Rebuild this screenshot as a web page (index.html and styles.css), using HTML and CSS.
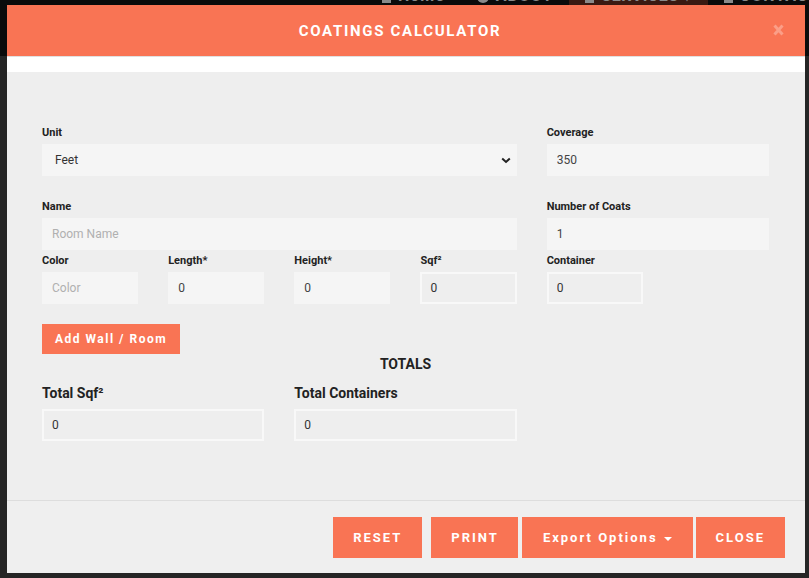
FILE: index.html
```html
<!DOCTYPE html>
<html lang="en">
<head>
<meta charset="utf-8">
<title>Coatings Calculator</title>
<link rel="stylesheet" href="styles.css">
</head>
<body>
<div class="site">
  <header class="site-nav">
    <ul class="nav-list">
      <li class="nav-item"><span class="nav-icon"></span>Home</li>
      <li class="nav-item"><span class="nav-icon round"></span>ABOUT</li>
      <li class="nav-item active"><span class="nav-icon"></span>SERVICES ▾</li>
      <li class="nav-item"><span class="nav-icon"></span>CONTACT</li>
    </ul>
  </header>
  <main class="site-body"></main>
</div>

<div class="modal">
  <div class="modal-header">
    <h4 class="modal-title">COATINGS CALCULATOR</h4>
    <button class="close" type="button" aria-label="Close">
      <svg width="11" height="12" viewBox="0 0 11 12"><path d="M1.5 1.5 L9.5 10.5 M9.5 1.5 L1.5 10.5" stroke="currentColor" stroke-width="3" fill="none"/></svg>
    </button>
  </div>
  <div class="modal-sep"></div>
  <div class="modal-body">
    <div class="row row-1">
      <div class="field span-8">
        <label>Unit</label>
        <div class="input select"><span>Feet</span>
          <svg class="chev" width="10" height="7" viewBox="0 0 10 7"><path d="M1.2 1.5 L5 5 L8.8 1.5" stroke="#222" stroke-width="2" fill="none"/></svg>
        </div>
      </div>
      <div class="field span-4">
        <label>Coverage</label>
        <input class="input" type="text" value="350">
      </div>
    </div>
    <div class="row row-2">
      <div class="field span-8">
        <label>Name</label>
        <input class="input" type="text" placeholder="Room Name">
      </div>
      <div class="field span-4">
        <label>Number of Coats</label>
        <input class="input" type="text" value="1">
      </div>
    </div>
    <div class="row row-3">
      <div class="field span-2">
        <label>Color</label>
        <input class="input" type="text" placeholder="Color">
      </div>
      <div class="field span-2">
        <label>Length*</label>
        <input class="input" type="text" value="0">
      </div>
      <div class="field span-2">
        <label>Height*</label>
        <input class="input" type="text" value="0">
      </div>
      <div class="field span-2">
        <label>Sqf²</label>
        <input class="input input-ro" type="text" value="0" readonly>
      </div>
      <div class="field span-2">
        <label>Container</label>
        <input class="input input-ro" type="text" value="0" readonly>
      </div>
    </div>
    <button class="btn-add" type="button">Add Wall / Room</button>
    <h5 class="totals-title">TOTALS</h5>
    <div class="row row-totals">
      <div class="field span-4">
        <label class="label-lg">Total Sqf²</label>
        <input class="input input-ro" type="text" value="0" readonly>
      </div>
      <div class="field span-4">
        <label class="label-lg">Total Containers</label>
        <input class="input input-ro" type="text" value="0" readonly>
      </div>
    </div>
  </div>
  <div class="modal-footer">
    <button class="btn" type="button">RESET</button>
    <button class="btn btn-print" type="button">PRINT</button>
    <button class="btn btn-export" type="button">Export Options<span class="caret"></span></button>
    <button class="btn btn-close" type="button">CLOSE</button>
  </div>
</div>
</body>
</html>
```

FILE: styles.css
```css
* { box-sizing: border-box; }

html, body {
  margin: 0;
  height: 100%;
}

body {
  background: #252525;
  font-family: Roboto, "Liberation Sans", Arial, sans-serif;
  overflow: hidden;
}

/* ---------- page behind the modal ---------- */
.site-nav {
  height: 56px;
  background: #0b0b0b;
  overflow: hidden;
}

.nav-list {
  list-style: none;
  margin: -13px 0 0 0;
  padding: 0 0 0 366px;
  display: flex;
  align-items: flex-start;
  gap: 0;
}

.nav-item {
  display: flex;
  align-items: flex-start;
  gap: 7px;
  color: #8a8a8a;
  font-size: 16px;
  font-weight: 700;
  letter-spacing: 1px;
  line-height: 18px;
  height: 60px;
  padding: 0 16px;
  white-space: nowrap;
}

.nav-item.active {
  background: #3a1a12;
  letter-spacing: 0.5px;
}

.nav-icon {
  display: inline-block;
  width: 9px;
  height: 16px;
  background: #8a8a8a;
}

.nav-icon.round { border-radius: 50%; width: 12px; height: 12px; margin-top: 4px; }

.site-body { height: calc(100% - 56px); }

/* ---------- modal ---------- */
.modal {
  position: absolute;
  left: 7px;
  top: 5px;
  width: 798px;
  height: 568px;
  background: #eeeeee;
  display: flex;
  flex-direction: column;
}

.modal-header {
  height: 51px;
  flex: none;
  background: #f97454;
  display: flex;
  align-items: center;
  padding: 0 15px 0 20px;
}

.modal-title {
  flex: 1;
  margin: 0;
  text-align: center;
  color: #ffffff;
  font-size: 15px;
  font-weight: 700;
  letter-spacing: 1.7px;
  line-height: 20px;
}

.close {
  width: 17px;
  height: 12px;
  padding: 0;
  border: 0;
  background: transparent;
  color: rgba(255, 255, 255, 0.3);
  display: flex;
  align-items: flex-start;
  justify-content: flex-start;
  margin-bottom: 2px;
}

.modal-sep {
  flex: none;
  height: 16px;
  border-top: 1px solid #e0e0e0;
  background: #ffffff;
}

.modal-body {
  flex: 1;
  padding: 53px 36px 0 35px;
}

.row {
  display: grid;
  grid-template-columns: repeat(12, 1fr);
  column-gap: 30px;
}

.row-1 { margin-bottom: 23px; }
.row-2 { margin-bottom: 3px; }

.span-2 { grid-column: span 2; }
.span-4 { grid-column: span 4; }
.span-8 { grid-column: span 8; }

label {
  display: block;
  font-size: 11px;
  line-height: 15px;
  font-weight: 700;
  color: #222222;
  margin-bottom: 4px;
}

.input {
  display: block;
  width: 100%;
  height: 32px;
  margin: 0;
  border: 0;
  border-radius: 0;
  background: #f5f5f5;
  padding: 0 10px;
  font-family: Roboto, "Liberation Sans", Arial, sans-serif;
  font-size: 12px;
  color: #444444;
  outline: none;
}

.input::placeholder { color: #b0b0b0; }

.input-ro {
  background: #eeeeee;
  border: 2px solid #f8f8f8;
  padding: 0 8px;
  color: #333333;
}

.select {
  display: flex;
  align-items: center;
  justify-content: space-between;
  padding: 0 6px 0 13px;
  color: #333333;
}

.chev { display: block; }

.btn-add {
  display: block;
  margin-top: 20px;
  height: 30px;
  padding: 0 13px;
  border: 0;
  border-radius: 0;
  background: #f97454;
  color: #ffffff;
  font-family: Roboto, "Liberation Sans", Arial, sans-serif;
  font-size: 12px;
  font-weight: 700;
  letter-spacing: 1.5px;
}

.totals-title {
  margin: 0;
  text-align: center;
  font-size: 14px;
  line-height: 20px;
  font-weight: 700;
  color: #222222;
}

.row-totals { margin-top: 9px; }

.label-lg {
  font-size: 14px;
  line-height: 20px;
  margin-bottom: 6px;
}

/* ---------- footer ---------- */
.modal-footer {
  flex: none;
  height: 73px;
  border-top: 1px solid #dddddd;
  background: #efefef;
  display: flex;
  justify-content: flex-end;
  align-items: flex-start;
  padding: 16px 20px 0;
}

.btn {
  height: 41px;
  padding: 0 20px;
  border: 0;
  border-radius: 0;
  background: #f97454;
  color: #ffffff;
  font-family: Roboto, "Liberation Sans", Arial, sans-serif;
  font-size: 13px;
  font-weight: 700;
  letter-spacing: 2px;
  display: flex;
  align-items: center;
  justify-content: center;
}

.btn-print { margin-left: 9px; padding: 0 19px 0 20px; }
.btn-export { margin-left: 4px; padding: 0 21px; }
.btn-close { margin-left: 3px; }

.caret {
  display: inline-block;
  width: 0;
  height: 0;
  margin-left: 6px;
  margin-top: 2px;
  border-top: 4px solid #ffffff;
  border-left: 4px solid transparent;
  border-right: 4px solid transparent;
}
```
